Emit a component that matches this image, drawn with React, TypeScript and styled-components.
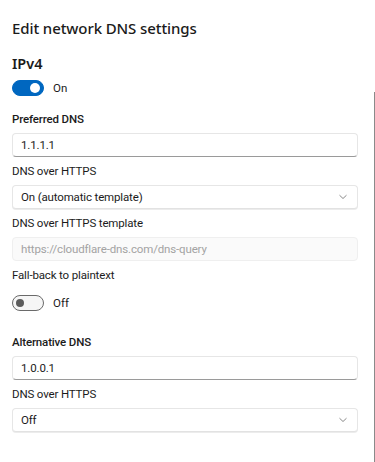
import React from "react";
import styled, { createGlobalStyle } from "styled-components";

const GlobalStyle = createGlobalStyle`
  html, body {
    margin: 0;
    padding: 0;
    background: #ffffff;
  }
  body {
    font-family: Roboto, "Noto Sans", sans-serif;
    color: #1b1b1b;
  }
`;

const Page = styled.div`
  display: flex;
  width: 375px;
  height: 462px;
  overflow: hidden;
`;

const Content = styled.div`
  flex: 1;
  display: flex;
  flex-direction: column;
  padding: 16px 16px 0 12px;
`;

const Rail = styled.div`
  width: 0;
  margin-top: 92px;
  border-left: 1px solid #8a8a8a;
`;

const Title = styled.h1`
  margin: 0 0 11px;
  font-family: "Noto Sans", sans-serif;
  font-size: 15px;
  line-height: 24px;
  font-weight: 500;
  letter-spacing: -0.1px;
`;

const Section = styled.h2`
  margin: 0 0 5px;
  font-family: "Noto Sans", sans-serif;
  font-size: 14.5px;
  line-height: 24px;
  font-weight: 600;
`;

const Label = styled.div<{ $strong?: boolean }>`
  font-size: 11.5px;
  line-height: 16px;
  letter-spacing: -0.15px;
  font-weight: ${(p) => (p.$strong ? 500 : 400)};
  margin-bottom: 6px;
`;

const Box = styled.div<{ $disabled?: boolean }>`
  display: flex;
  align-items: center;
  justify-content: space-between;
  box-sizing: border-box;
  height: 24px;
  padding: 0 9px 0 8px;
  margin-bottom: 6px;
  border-radius: 4px;
  border: 1px solid ${(p) => (p.$disabled ? "#efefef" : "#e6e6e6")};
  border-bottom-color: ${(p) => (p.$disabled ? "#efefef" : "#9a9a9a")};
  background: ${(p) => (p.$disabled ? "#fafafa" : "#ffffff")};
  color: ${(p) => (p.$disabled ? "#a3a3a3" : "#1b1b1b")};
  font-size: 11.5px;
  letter-spacing: -0.15px;
`;

const SelectBox = styled(Box)`
  border-bottom-color: #e2e2e2;
  box-shadow: 0 1px 0 #ececec;
`;

const ToggleRow = styled.div<{ $gapTop: number; $gapBottom: number }>`
  display: flex;
  align-items: center;
  gap: 9px;
  margin-top: ${(p) => p.$gapTop}px;
  margin-bottom: ${(p) => p.$gapBottom}px;
  font-size: 11.5px;
`;

const Track = styled.div<{ $on: boolean }>`
  box-sizing: border-box;
  width: 32px;
  height: 16px;
  border-radius: 8px;
  padding: 0 3px;
  display: flex;
  align-items: center;
  justify-content: ${(p) => (p.$on ? "flex-end" : "flex-start")};
  background: ${(p) => (p.$on ? "#0067c0" : "#f6f6f6")};
  border: 1px solid ${(p) => (p.$on ? "#0067c0" : "#6a6a6a")};
`;

const Thumb = styled.div<{ $on: boolean }>`
  width: ${(p) => (p.$on ? 10 : 8)}px;
  height: ${(p) => (p.$on ? 10 : 8)}px;
  border-radius: 50%;
  background: ${(p) => (p.$on ? "#ffffff" : "#5c5c5c")};
`;

const Chevron = () => (
  <svg width="10" height="6" viewBox="0 0 10 6" fill="none">
    <path d="M1.5 1.2 L5 4.5 L8.5 1.2" stroke="#8a8a8a" strokeWidth="1" />
  </svg>
);

const Toggle = ({ on }: { on: boolean }) => (
  <Track $on={on}>
    <Thumb $on={on} />
  </Track>
);

export default function App() {
  return (
    <>
      <GlobalStyle />
      <Page>
        <Content>
          <Title>Edit network DNS settings</Title>
          <Section>IPv4</Section>
          <ToggleRow $gapTop={0} $gapBottom={15}>
            <Toggle on />
            <span>On</span>
          </ToggleRow>

          <Label $strong>Preferred DNS</Label>
          <Box>1.1.1.1</Box>
          <Label>DNS over HTTPS</Label>
          <SelectBox>
            <span>On (automatic template)</span>
            <Chevron />
          </SelectBox>
          <Label>DNS over HTTPS template</Label>
          <Box $disabled>https://cloudflare-dns.com/dns-query</Box>
          <Label>Fall-back to plaintext</Label>
          <ToggleRow $gapTop={6} $gapBottom={23}>
            <Toggle on={false} />
            <span>Off</span>
          </ToggleRow>

          <Label $strong>Alternative DNS</Label>
          <Box>1.0.0.1</Box>
          <Label>DNS over HTTPS</Label>
          <SelectBox>
            <span>Off</span>
            <Chevron />
          </SelectBox>
        </Content>
        <Rail />
      </Page>
    </>
  );
}
